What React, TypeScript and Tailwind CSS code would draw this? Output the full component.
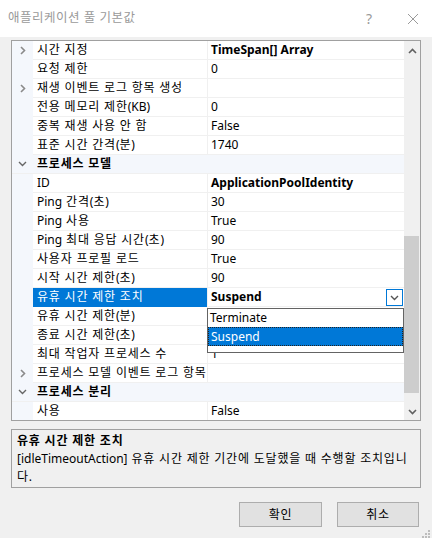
import React from "react";

type Row =
  | { kind: "prop"; name: string; value?: string; bold?: boolean; expand?: boolean; selected?: boolean }
  | { kind: "cat"; name: string };

const rows: Row[] = [
  { kind: "prop", name: "시간 지정", value: "TimeSpan[] Array", bold: true, expand: true },
  { kind: "prop", name: "요청 제한", value: "0" },
  { kind: "prop", name: "재생 이벤트 로그 항목 생성", value: "", expand: true },
  { kind: "prop", name: "전용 메모리 제한(KB)", value: "0" },
  { kind: "prop", name: "중복 재생 사용 안 함", value: "False" },
  { kind: "prop", name: "표준 시간 간격(분)", value: "1740" },
  { kind: "cat", name: "프로세스 모델" },
  { kind: "prop", name: "ID", value: "ApplicationPoolIdentity", bold: true },
  { kind: "prop", name: "Ping 간격(초)", value: "30" },
  { kind: "prop", name: "Ping 사용", value: "True" },
  { kind: "prop", name: "Ping 최대 응답 시간(초)", value: "90" },
  { kind: "prop", name: "사용자 프로필 로드", value: "True" },
  { kind: "prop", name: "시작 시간 제한(초)", value: "90" },
  { kind: "prop", name: "유휴 시간 제한 조치", value: "Suspend", bold: true, selected: true },
  { kind: "prop", name: "유휴 시간 제한(분)", value: "" },
  { kind: "prop", name: "종료 시간 제한(초)", value: "" },
  { kind: "prop", name: "최대 작업자 프로세스 수", value: "1" },
  { kind: "prop", name: "프로세스 모델 이벤트 로그 항목", value: "", expand: true },
  { kind: "cat", name: "프로세스 분리" },
  { kind: "prop", name: "사용", value: "False" },
  { kind: "prop", name: "", value: "" },
];

const font = { fontFamily: '"Noto Sans", "Noto Sans CJK KR", sans-serif' };

function K({ t }: { t: string }) {
  const parts = t.split(/([\uAC00-\uD7A3\u3131-\u318E ]+)/).filter((p) => p.length > 0);
  return (
    <span className="whitespace-pre">
      {parts.map((p, i) =>
        /[\uAC00-\uD7A3]/.test(p) ? (
          <span key={i} className="tracking-[0.8px]">
            {p}
          </span>
        ) : (
          <span key={i}>{p}</span>
        )
      )}
    </span>
  );
}

function ChevronRight() {
  return (
    <svg width="8" height="9" viewBox="0 0 8 9">
      <path d="M2 1 L5.5 4.5 L2 8" fill="none" stroke="#8a8a8a" strokeWidth="1.6" />
    </svg>
  );
}
function ChevronDown({ color = "#555" }: { color?: string }) {
  return (
    <svg width="9" height="6" viewBox="0 0 9 6">
      <path d="M1 1 L4.5 4.5 L8 1" fill="none" stroke={color} strokeWidth="1.4" />
    </svg>
  );
}

export default function App() {
  return (
    <div className="w-[432px] h-[538px] bg-[#f0f0f0] flex flex-col text-[12px] text-black overflow-hidden" style={font}>
      {/* Title bar */}
      <div className="h-[37px] bg-white flex items-center shrink-0">
        <div className="pl-[8px] text-[12.5px] text-[#9a9a9a] flex-1 tracking-[0.5px]">애플리케이션 풀 기본값</div>
        <div className="w-[30px] text-center text-[#9a9a9a] text-[14px] mr-[14px]">?</div>
        <div className="w-[30px] flex justify-center mr-[4px]">
          <svg width="12" height="12" viewBox="0 0 12 12">
            <path d="M1 1 L11 11 M11 1 L1 11" stroke="#9a9a9a" strokeWidth="1" />
          </svg>
        </div>
      </div>

      {/* Property grid */}
      <div className="mt-[3px] ml-[11px] w-[410px] h-[381px] border border-[#a0a0a0] flex bg-white shrink-0">
        <div className="relative flex-1 overflow-hidden">
          {rows.map((r, i) =>
            r.kind === "cat" ? (
              <div key={i} className="h-[19px] flex items-center bg-[#f4f7fc] border-b border-[#f0f0f0]">
                <div className="w-[21px] flex justify-center">
                  <ChevronDown color="#666" />
                </div>
                <div className="pl-[4px] font-bold">
                  <K t={r.name} />
                </div>
              </div>
            ) : (
              <div key={i} className="h-[19px] flex">
                <div className="w-[21px] bg-[#f4f7fc] flex items-center justify-center shrink-0">
                  {r.expand ? <ChevronRight /> : null}
                </div>
                <div
                  className={
                    "w-[174px] shrink-0 pl-[4px] flex items-center whitespace-nowrap overflow-hidden border-b " +
                    (r.selected ? "bg-[#0078d7] text-white border-[#0078d7]" : "border-[#f0f0f0]")
                  }
                >
                  <K t={r.name} />
                </div>
                <div className="w-[1px] bg-[#f0f0f0] shrink-0" />
                <div className="flex-1 flex items-center pl-[3px] border-b border-[#f0f0f0] relative">
                  <span className={r.bold ? "font-bold" : ""}>{r.value}</span>
                  {r.selected ? (
                    <div className="absolute right-[1px] top-[1px] w-[17px] h-[17px] border border-[#0078d7] bg-white flex items-center justify-center">
                      <ChevronDown />
                    </div>
                  ) : null}
                </div>
              </div>
            )
          )}

          {/* dropdown list */}
          <div className="absolute left-[195px] top-[267px] w-[197px] h-[45px] bg-white border border-[#646464] flex flex-col">
            <div className="h-[18px] flex items-center pl-[2px]">Terminate</div>
            <div className="h-[19px] flex items-center pl-[2px] bg-[#0078d7] text-white border border-dotted border-[#222]">
              Suspend
            </div>
          </div>
        </div>

        {/* scrollbar */}
        <div className="w-[16px] bg-[#f0f0f0] flex flex-col items-center shrink-0">
          <div className="h-[17px] flex items-center justify-center pt-[2px]">
            <svg width="9" height="6" viewBox="0 0 9 6">
              <path d="M1 5 L4.5 1.5 L8 5" fill="none" stroke="#606060" strokeWidth="1.6" />
            </svg>
          </div>
          <div className="h-[178px]" />
          <div className="w-[15px] h-[157px] bg-[#cdcdcd] self-start" />
          <div className="flex-1" />
          <div className="h-[17px] flex items-center justify-center">
            <svg width="9" height="6" viewBox="0 0 9 6">
              <path d="M1 1 L4.5 4.5 L8 1" fill="none" stroke="#606060" strokeWidth="1.6" />
            </svg>
          </div>
        </div>
      </div>

      {/* description */}
      <div className="mt-[8px] ml-[11px] w-[410px] h-[59px] border border-[#a0a0a0] px-[5px] pt-[2px] leading-[18px] shrink-0">
        <div className="font-bold">
          <K t="유휴 시간 제한 조치" />
        </div>
        <div className="whitespace-nowrap">
          <K t="[idleTimeoutAction] 유휴 시간 제한 기간에 도달했을 때 수행할 조치입니" />
        </div>
        <div>
          <K t="다." />
        </div>
      </div>

      {/* buttons */}
      <div className="mt-[14px] flex justify-end pr-[13px] gap-[15px] shrink-0">
        <button className="w-[83px] h-[25px] bg-[#e1e1e1] border border-[#adadad] text-[12px]">
          <K t="확인" />
        </button>
        <button className="w-[82px] h-[25px] bg-[#e1e1e1] border border-[#adadad] text-[12px]">
          <K t="취소" />
        </button>
      </div>

      <div className="flex justify-end pr-[2px] mt-[1px]">
        <svg width="10" height="10" viewBox="0 0 10 10">
          <rect x="8" y="2" width="2" height="2" fill="#bdbdbd" />
          <rect x="5" y="5" width="2" height="2" fill="#bdbdbd" />
          <rect x="8" y="5" width="2" height="2" fill="#bdbdbd" />
          <rect x="2" y="8" width="2" height="2" fill="#bdbdbd" />
          <rect x="5" y="8" width="2" height="2" fill="#bdbdbd" />
          <rect x="8" y="8" width="2" height="2" fill="#bdbdbd" />
        </svg>
      </div>
    </div>
  );
}
